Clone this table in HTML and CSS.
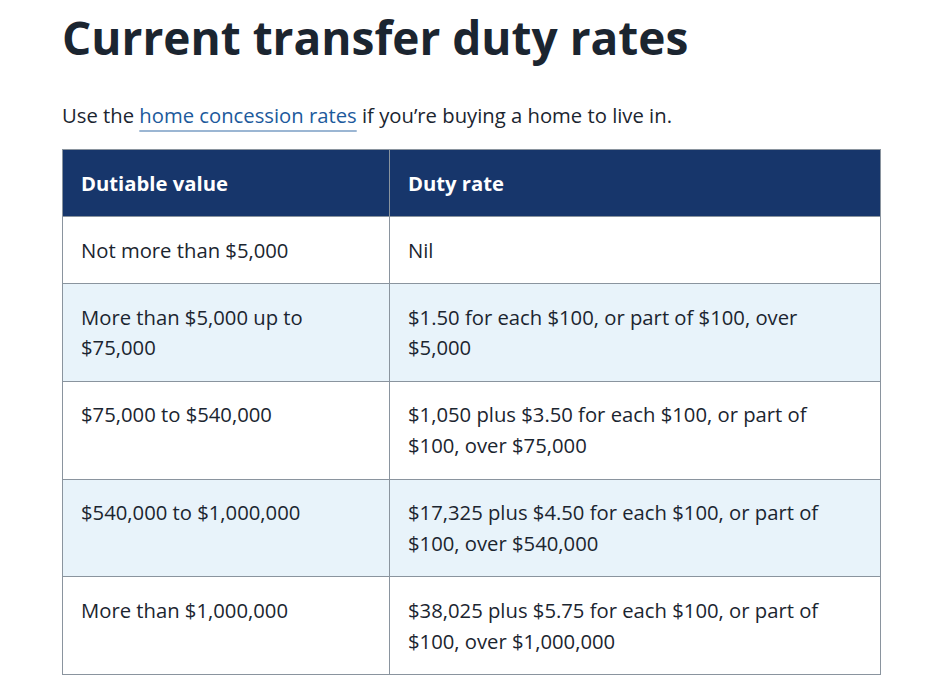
FILE: index.html
```html
<!DOCTYPE html>
<html lang="en">
<head>
<meta charset="utf-8">
<title>Current transfer duty rates</title>
<link rel="stylesheet" href="styles.css">
</head>
<body>
<main class="content">
  <h2 class="title">Current transfer duty rates</h2>
  <p class="intro">Use the <a class="link" href="#">home concession rates</a> if you’re buying a home to live in.</p>
  <table class="rates">
    <colgroup><col class="col-value"><col class="col-rate"></colgroup>
    <thead>
      <tr><th>Dutiable value</th><th>Duty rate</th></tr>
    </thead>
    <tbody>
      <tr><td>Not more than $5,000</td><td>Nil</td></tr>
      <tr><td>More than $5,000 up to $75,000</td><td>$1.50 for each $100, or part of $100, over $5,000</td></tr>
      <tr><td>$75,000 to $540,000</td><td>$1,050 plus $3.50 for each $100, or part of $100, over $75,000</td></tr>
      <tr><td>$540,000 to $1,000,000</td><td>$17,325 plus $4.50 for each $100, or part of $100, over $540,000</td></tr>
      <tr><td>More than $1,000,000</td><td>$38,025 plus $5.75 for each $100, or part of $100, over $1,000,000</td></tr>
    </tbody>
  </table>
</main>
</body>
</html>
```

FILE: styles.css
```css
html, body {
  margin: 0;
  padding: 0;
  background: #ffffff;
}
body {
  font-family: "Open Sans", "Noto Sans", sans-serif;
  color: #1b2530;
}
.content {
  padding: 0 64px 0 62px;
}
.title {
  margin: 0;
  padding-top: 7px;
  font-size: 46px;
  line-height: 60px;
  font-weight: 700;
  color: #1b2530;
}
.intro {
  margin: 33px 0 0 0;
  font-size: 20.25px;
  line-height: 30px;
}
.link {
  color: #1c5a9c;
  text-decoration: underline;
  text-decoration-color: #9bb6d3;
  text-decoration-thickness: 2px;
  text-underline-offset: 7px;
}
.rates {
  margin-top: 19px;
  width: 818px;
  table-layout: fixed;
  border-collapse: collapse;
  font-size: 20.25px;
  line-height: 30.8px;
}
.col-value { width: 327px; }
.col-rate { width: 491px; }
.rates th, .rates td {
  border: 1px solid #8a949e;
  padding: 17.6px 40px 17.6px 18px;
  text-align: left;
  vertical-align: top;
}
.rates th {
  background: #17366b;
  color: #ffffff;
  font-weight: 700;
}
.rates tbody tr:nth-child(even) td {
  background: #e8f3fa;
}
```
